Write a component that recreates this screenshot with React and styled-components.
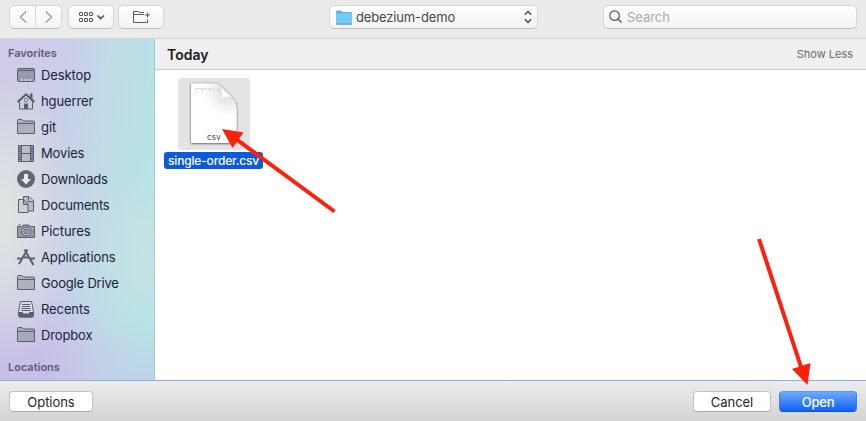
import React from "react";
import styled, { createGlobalStyle, css } from "styled-components";

const GlobalStyle = createGlobalStyle`
  * { box-sizing: border-box; }
  body { margin: 0; overflow: hidden; }
`;

const Dialog = styled.div`
  position: relative;
  width: 866px;
  height: 421px;
  display: flex;
  flex-direction: column;
  overflow: hidden;
  background: #fff;
  color: #262626;
  font-family: Inter, "Liberation Sans", sans-serif;
  font-size: 13px;
  line-height: 16px;
`;

const Label = styled.span`
  white-space: nowrap;
  letter-spacing: ${(p) => p.$track || 0}px;
`;

const Toolbar = styled.header`
  flex: none;
  height: 39px;
  display: flex;
  align-items: flex-start;
  padding: 5px 9px 0;
  background: #ebebeb;
  border-bottom: 1px solid #d2d2d2;
`;

const controlSurface = css`
  height: 24px;
  background: linear-gradient(#fefefe, #f4f4f4);
  border: 1px solid #d6d6d6;
  border-bottom-color: #bdbdbd;
  border-radius: 5px;
`;

const ToolButton = styled.button`
  ${controlSurface}
  width: ${(p) => p.$width}px;
  margin: 0 ${(p) => p.$gap || 0}px 0 0;
  padding: 0;
  display: flex;
  align-items: center;
  justify-content: center;
  ${(p) => p.$join === "left" && "border-radius: 5px 0 0 5px;"}
  ${(p) => p.$join === "right" && "border-radius: 0 5px 5px 0; border-left: 0;"}
`;

const FolderPopup = styled.div`
  ${controlSurface}
  width: 209px;
  margin-left: 165px;
  padding: 0 4px 0 6px;
  display: flex;
  align-items: center;
  gap: 4px;
  color: #454545;
  > :last-child { margin-left: auto; }
`;

const SearchField = styled.div`
  ${controlSurface}
  width: 254px;
  margin-left: auto;
  padding: 0 5px;
  display: flex;
  align-items: center;
  gap: 4px;
  color: #a9a9a9;
`;

const Body = styled.main`
  flex: 1;
  min-height: 0;
  display: flex;
`;

const Sidebar = styled.nav`
  flex: none;
  width: 155px;
  padding-top: 6px;
  border-right: 1px solid #a3cad4;
  color: #1b2338;
  background:
    radial-gradient(ellipse 110px 90px at 0 0, #d2cbe8 0%, #d2cbe800 100%),
    radial-gradient(ellipse 80px 150px at 0 52%, #dfe2e2 15%, #dfe2e200 100%),
    radial-gradient(ellipse 140px 110px at 0 100%, #c8c0e8 35%, #c8c0e800 100%),
    radial-gradient(ellipse 100px 60px at 100% 100%, #bfd1e8 0%, #bfd1e800 100%),
    radial-gradient(ellipse 70px 80px at 100% 62%, #c9e2e3 0%, #c9e2e300 100%),
    linear-gradient(94deg, #cccfe6 0%, #c8cfe8 38%, #c1dbe7 62%, #b5e6e5 96%);
`;

const GroupTitle = styled.h2`
  height: 17px;
  margin: ${(p) => p.$top || 0}px 0 0 8px;
  font-size: 11px;
  font-weight: 600;
  line-height: 17px;
  letter-spacing: -0.02px;
  color: #5c5b7c;
`;

const PlaceRow = styled.div`
  height: 26px;
  padding-left: 16px;
  display: flex;
  align-items: center;
  gap: 5px;
  > svg { flex: none; }
`;

const Browser = styled.section`
  flex: 1;
  display: flex;
  flex-direction: column;
`;

const SectionBar = styled.div`
  height: 31px;
  flex: none;
  padding: 1px 13px 0 12px;
  display: flex;
  align-items: center;
  justify-content: space-between;
  background: #efefef;
  border-bottom: 1px solid #cbcbcb;
`;

const SectionTitle = styled.strong`
  font-size: 14px;
  font-weight: 600;
  color: #1c1c1c;
`;

const ShowLess = styled.span`
  padding-bottom: 1px;
  font-size: 11px;
  color: #6b6b6b;
`;

const FileItem = styled.figure`
  width: 99px;
  margin: 8px 0 0 9px;
  display: flex;
  flex-direction: column;
  align-items: center;
`;

const Thumbnail = styled.div`
  width: 72px;
  height: 72px;
  border-radius: 4px;
  background: #e3e3e3;
`;

const FileName = styled.figcaption`
  width: 99px;
  height: 17px;
  margin-top: 2px;
  border-radius: 3px;
  background: #0a5bdb;
  color: #fff;
  font-size: 12px;
  font-weight: 500;
  line-height: 17px;
  letter-spacing: -0.17px;
  text-align: center;
`;

const Footer = styled.footer`
  flex: none;
  height: 41px;
  padding: 10px 9px 0;
  display: flex;
  gap: 8px;
  background: linear-gradient(#ececec, #d3d3d3);
  border-top: 1px solid #8fb2d4;
`;

const PushButton = styled.button`
  width: ${(p) => p.$width}px;
  height: 21px;
  padding: 0;
  border: 1px solid #c3c3c3;
  border-bottom-color: #a9a9a9;
  border-radius: 4px;
  background: #fff;
  color: #262626;
  font: inherit;
  letter-spacing: -0.05px;
  line-height: 18px;
  ${(p) => p.$pushRight && "margin-right: auto;"}
  ${(p) =>
    p.$primary &&
    css`
      color: #fff;
      font-weight: 500;
      letter-spacing: -0.2px;
      background: linear-gradient(#6fa9f9, #0f62fb);
      border-color: #5f9bf3 #387ff0 #0c52dc;
    `}
`;

const Annotations = styled.svg`
  position: absolute;
  inset: 0;
  pointer-events: none;
`;

const INK = "#595e70";
const FILL = "#6d718260";

const FolderGlyph = () => (
  <g fill={FILL} stroke={INK}>
    <path d="M1.5 16.5v-13q0-1 1-1h3.5l1.500 1.500h10q1 0 1 1v11.500z" />
    <path d="M1.500 6.500h17" />
  </g>
);

const GLYPHS = {
  desktop: (
    <g>
      <rect x="1.5" y="3.5" width="17" height="13" rx="1" fill="#65697b85" stroke={INK} />
      <path d="M2 5.5h16" stroke={INK} />
      <path d="M5 14h10v2H5z" fill="#d4d8e8" />
      <path d="M7.5 14v2M10 14v2M12.500 14v2" stroke={INK} strokeWidth=".7" />
    </g>
  ),
  home: (
    <g>
      <path d="M3.5 10.500v7.500h13v-7.500L10 4z" fill="#c8cfe0" stroke={INK} />
      <path d="M1.500 11L10 3.300l8.500 7.700" fill="none" stroke={INK} strokeWidth="1.800" />
      <path d="M14 2.500h2.500V8L14 6z" fill={INK} />
      <rect x="8" y="12.500" width="4" height="5.500" fill={INK} />
      <rect x="8.500" y="7.500" width="3" height="3" rx=".8" fill="#dde4ee" stroke={INK} />
    </g>
  ),
  folder: <FolderGlyph />,
  movies: (
    <g fill="none" stroke={INK}>
      <rect x="2" y="2" width="16" height="17" fill={INK} stroke="none" />
      <path d="M6 3h8v7H6zM6 11h8v7H6z" fill="#b9bdc8" stroke="none" />
      <path d="M4 3v15M16 3v15" stroke="#dce0e8" strokeDasharray="1 1" />
    </g>
  ),
  downloads: (
    <g>
      <circle cx="10" cy="10" r="9" fill="#62666f" />
      <path d="M8 5h4v5h3L10 15.500 5 10h3z" fill="#e8eaf0" />
    </g>
  ),
  documents: (
    <g stroke={INK} fill="#a4a7b4a0">
      <path d="M7.500 1.500h5.500l4.500 4.500v10h-10z" />
      <path d="M12.500 2v4.500h5" fill="#cdd0d9" />
      <path d="M2.500 4.500h5l4.500 4.500v8.500H2.500z" fill="#cdd0d9" />
      <path d="M7.500 5v4.500H12" fill="#a4a7b4" />
    </g>
  ),
  pictures: (
    <g>
      <path d="M1.500 5.500h4l1.500-1.500h6l1.500 1.500h4v11h-17z" fill="#737784b0" stroke={INK} />
      <path d="M2.500 3.800h2" stroke={INK} />
      <circle cx="10" cy="10.500" r="4.300" fill="#c7cad2" stroke={INK} />
      <circle cx="10" cy="10.500" r="2.300" fill="#9ea2ad" stroke={INK} />
      <path d="M16 7.500h1" stroke="#e4e6ec" />
    </g>
  ),
  applications: (
    <g fill="none" stroke={INK}>
      <path d="M11.500 2.500L3 17" strokeWidth="2" />
      <path d="M8.500 2.500L17.500 18" strokeWidth="2" />
      <path d="M1 11.500h5M8 10.500h4.500M14.500 11.500H19" strokeWidth="2.200" />
    </g>
  ),
  recents: (
    <g>
      <path d="M4.500 2.500h11l2 10v4q0 1.500-2 1.500h-11q-2 0-2-1.500v-4z" fill="#dfe3eb90" stroke={INK} />
      <path d="M2.300 13h4.200l1 1.500h5l1-1.500h4.200v3.500q0 2-2 2H4.300q-2 0-2-2z" fill={INK} />
      <path d="M6 5.500h8M6 7.500h8M5.500 9.500h9M5.500 11.500h9" stroke={INK} />
    </g>
  ),
};

const PlaceIcon = ({ kind }) => (
  <svg width="20" height="20" viewBox="0 0 20 20">{GLYPHS[kind]}</svg>
);

const PLACES = [
  ["desktop", "Desktop", -0.12],
  ["home", "hguerrer", -0.12],
  ["folder", "git", 0],
  ["movies", "Movies", -0.15],
  ["downloads", "Downloads", -0.2],
  ["documents", "Documents", -0.15],
  ["pictures", "Pictures", -0.04],
  ["applications", "Applications", -0.1],
  ["folder", "Google Drive", -0.18],
  ["recents", "Recents", -0.1],
  ["folder", "Dropbox", -0.13],
];

const Chevron = ({ flip }) => (
  <svg width="10" height="14" viewBox="0 0 10 14" fill="none" stroke="#999" strokeWidth="1.4">
    <path d={flip ? "M2 1.5l5.5 5.5L2 12.5" : "M8 1.5L2.5 7 8 12.5"} />
  </svg>
);

const GridIcon = () => (
  <svg width="27" height="14" viewBox="0 0 27 14" fill="none" stroke="#505050">
    {[2.5, 8.5].map((y) =>
      [1.5, 6.5, 11.5].map((x) => (
        <rect key={`${x}-${y}`} x={x} y={y} width="3" height="3" rx="0.5" />
      ))
    )}
    <path d="M19.500 5.500l3.200 3 3.200-3" strokeWidth="1.700" />
  </svg>
);

const NewFolderIcon = () => (
  <svg width="19" height="14" viewBox="0 0 19 14" fill="none" stroke="#5b5b5b">
    <path d="M12 2.500H7.500L6 1.500H1.500v11h14v-3M1.500 4.500H12M15.500 2.500v5M13 5h5" />
  </svg>
);

const BlueFolder = () => (
  <svg width="16" height="15" viewBox="0 0 16 15">
    <path d="M0 13.500V1.500Q0 .5 1 .5h4l1.500 1.500H15q1 0 1 1v10.500q0 1-1 1H1q-1 0-1-1z" fill="#5bb7e6" />
    <path d="M0 3.500h16v10H0z" fill="#73ccf7" />
    <path d="M0.500 14.200h15" stroke="#4aa3d1" />
  </svg>
);

const Stepper = () => (
  <svg width="10" height="14" viewBox="0 0 10 14" fill="none" stroke="#484848" strokeWidth="1.4">
    <path d="M1.8 4.7L5 1.5l3.2 3.2M1.8 9.3L5 12.5l3.2-3.2" />
  </svg>
);

const SearchIcon = () => (
  <svg width="14" height="14" viewBox="0 0 14 14" fill="none" stroke="#585858" strokeWidth="1.2">
    <circle cx="5.600" cy="5.600" r="4.800" />
    <path d="M9.200 9.200l3.300 3.300" strokeWidth="1.500" />
  </svg>
);

const CsvDocument = () => (
  <svg width="72" height="72" viewBox="0 0 72 72">
    <defs>
      <linearGradient id="curl" x1="0" y1="1" x2="1" y2="0">
        <stop offset="0" stopColor="#fff" />
        <stop offset=".6" stopColor="#f8f8f8" />
        <stop offset="1" stopColor="#d0d0d0" />
      </linearGradient>
      <radialGradient id="shade" gradientUnits="userSpaceOnUse" cx="50" cy="14" r="25">
        <stop offset="0" stopColor="#d8d8d8" />
        <stop offset=".5" stopColor="#eeeeee" />
        <stop offset="1" stopColor="#fff" />
      </radialGradient>
      <filter id="soft" x="-10%" y="-10%" width="120%" height="120%">
        <feDropShadow dx="0" dy="0.5" stdDeviation="0.8" floodOpacity="0.75" />
      </filter>
    </defs>
    <path d="M13 5.500h23c4 0 6 1.500 9 5l8.500 8.500c3.500 4 5 7 5 12v34H13z" fill="url(#shade)" filter="url(#soft)" />
    <path d="M17.500 14v-3.500h5v2M24.500 14v-3.500h4v2M30 10.500h4M32 10.500v3M36.500 10v3.500M39.500 10v3.500M41.500 10v3.500" fill="none" stroke="#dadada" />
    <path d="M43 9c1.500 4 1 8 0 10.500 4-1 7-1 10.500-.5z" fill="url(#curl)" />
    <text x="36" y="61.500" textAnchor="middle" fontSize="8" letterSpacing="0.300" fill="#444">csv</text>
  </svg>
);

export default function App() {
  return (
    <>
      <GlobalStyle />
      <Dialog>
        <Toolbar>
          <ToolButton $width={27} $join="left"><Chevron /></ToolButton>
          <ToolButton $width={26} $join="right" $gap={6}><Chevron flip /></ToolButton>
          <ToolButton $width={46} $gap={4}><GridIcon /></ToolButton>
          <ToolButton $width={46}><NewFolderIcon /></ToolButton>
          <FolderPopup>
            <BlueFolder />
            <Label $track={-0.15}>debezium-demo</Label>
            <Stepper />
          </FolderPopup>
          <SearchField>
            <SearchIcon />
            <Label $track={-0.05}>Search</Label>
          </SearchField>
        </Toolbar>
        <Body>
          <Sidebar>
            <GroupTitle>Favorites</GroupTitle>
            {PLACES.map(([kind, name, track]) => (
              <PlaceRow key={name}>
                <PlaceIcon kind={kind} />
                <Label $track={track}>{name}</Label>
              </PlaceRow>
            ))}
            <GroupTitle $top={11}>Locations</GroupTitle>
          </Sidebar>
          <Browser>
            <SectionBar>
              <SectionTitle>Today</SectionTitle>
              <ShowLess>Show Less</ShowLess>
            </SectionBar>
            <FileItem>
              <Thumbnail><CsvDocument /></Thumbnail>
              <FileName>single-order.csv</FileName>
            </FileItem>
          </Browser>
        </Body>
        <Footer>
          <PushButton $width={84} $pushRight>Options</PushButton>
          <PushButton $width={78}>Cancel</PushButton>
          <PushButton $width={78} $primary>Open</PushButton>
        </Footer>
        <Annotations width="866" height="421" viewBox="0 0 866 421">
          <g stroke="#ff1f0a" strokeWidth="4" fill="#ff1f0a">
            <path d="M334.500 211.500L236 139" />
            <path d="M222 129l21.500 3.500L232.500 148z" stroke="none" />
            <path d="M759 239l42 128" />
            <path d="M807.500 385l-15.500-16 18.500-6z" stroke="none" />
          </g>
        </Annotations>
      </Dialog>
    </>
  );
}
